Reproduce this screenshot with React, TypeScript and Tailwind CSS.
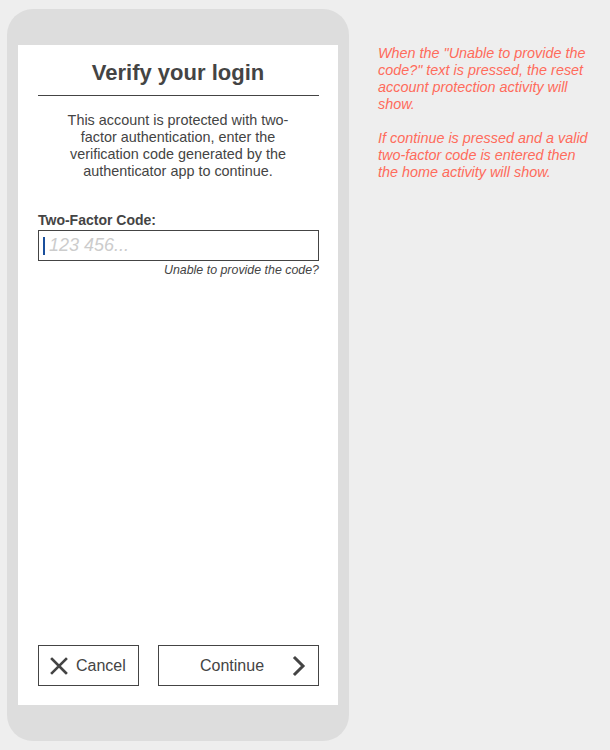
export default function App() {
  return (
    <div
      className="flex h-[750px] w-[610px] bg-[#eeeeee] text-[#444444]"
      style={{ fontFamily: '"Liberation Sans", Arial, sans-serif' }}
    >
      {/* phone frame */}
      <div className="ml-[7px] mt-[9px] flex h-[732px] w-[342px] flex-col rounded-[26px] bg-[#dddddd] px-[11px] pt-[36px]">
        <div className="flex h-[660px] flex-col bg-white px-[20px]">
          <h1 className="mt-[15px] text-center text-[22px] font-bold leading-[26px]">
            Verify your login
          </h1>
          <div className="mt-[9px] h-px w-[281px] bg-[#444444]" />
          <p className="mx-auto mt-[16px] w-[250px] text-center text-[14.4px] leading-[17px]">
            This account is protected with two-factor authentication, enter the verification code generated by the authenticator app to continue.
          </p>

          <label className="mt-[32px] text-[14px] font-bold leading-[16px]">Two-Factor Code:</label>
          <div className="mt-[2px] flex h-[31px] w-[281px] items-center border border-[#444444] pl-[4px]">
            <span className="h-[18px] w-[2px] bg-[#1a4f9c]" />
            <span className="ml-[4px] text-[18px] italic text-[#cccccc]">123 456...</span>
          </div>
          <p className="mt-[2px] w-[281px] text-right text-[12.4px] italic leading-[14px]">
            Unable to provide the code?
          </p>

          <div className="mt-auto mb-[19px] flex w-[281px] justify-between">
            <button className="flex h-[41px] w-[101px] items-center gap-[7px] border border-[#444444] pl-[10px] text-[16px]">
              <svg width="20" height="20" viewBox="0 0 20 20" fill="none" stroke="#444444" strokeWidth="2.6" strokeLinecap="square">
                <path d="M3 3 L17 17 M17 3 L3 17" />
              </svg>
              Cancel
            </button>
            <button className="flex h-[41px] w-[161px] items-center border border-[#444444] pl-[41px] pr-[12px] text-[16px]">
              <span className="flex-1 text-left">Continue</span>
              <svg width="14" height="22" viewBox="0 0 14 22" fill="none" stroke="#444444" strokeWidth="3" strokeLinecap="square">
                <path d="M3 3 L11 11 L3 19" />
              </svg>
            </button>
          </div>
        </div>
      </div>

      {/* annotation */}
      <div className="ml-[29px] mt-[45px] w-[214px] text-[14.4px] italic leading-[17px] text-[#ff6b5b]">
        <p>When the "Unable to provide the code?" text is pressed, the reset account protection activity will show.</p>
        <p className="mt-[17px]">If continue is pressed and a valid two-factor code is entered then the home activity will show.</p>
      </div>
    </div>
  );
}
